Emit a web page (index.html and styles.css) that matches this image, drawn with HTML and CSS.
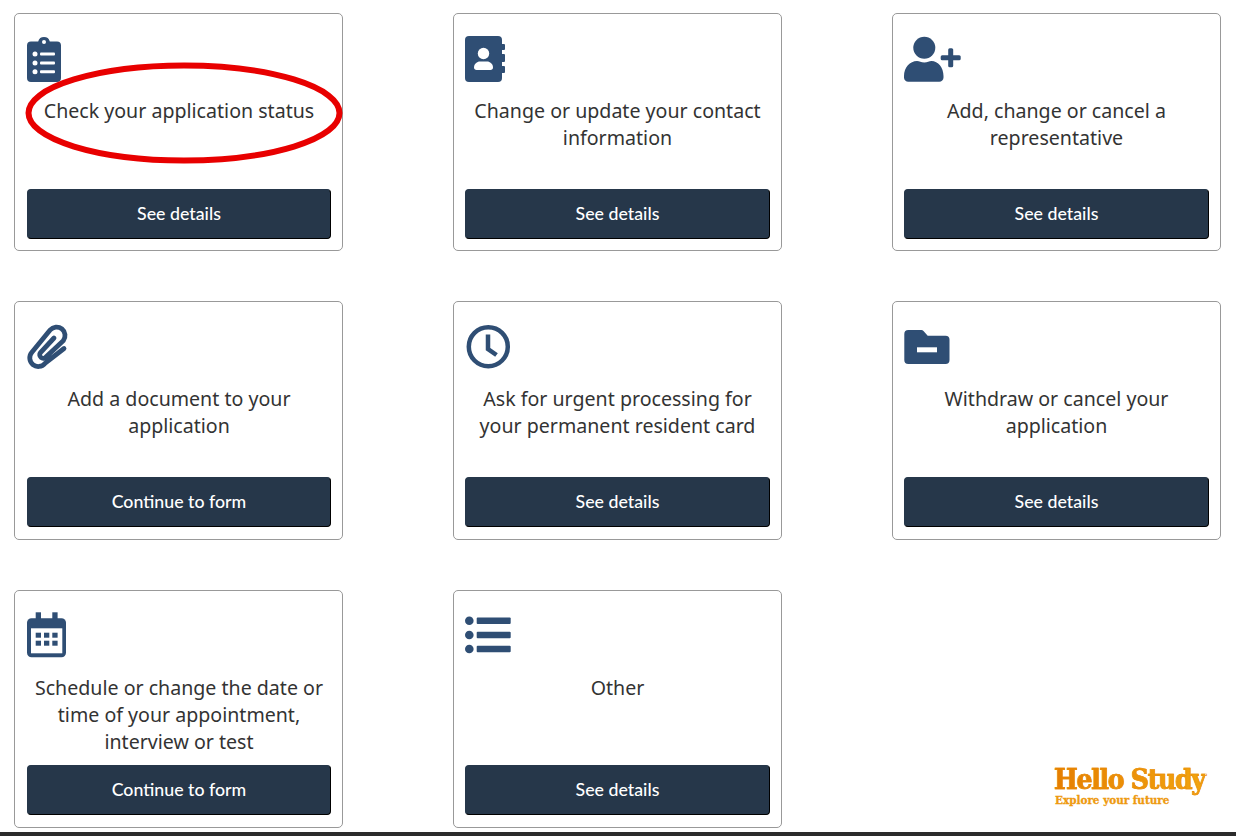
FILE: index.html
```html
<!DOCTYPE html>
<html lang="en">
<head>
<meta charset="utf-8">
<title>Services</title>
<link rel="stylesheet" href="styles.css">
</head>
<body>
<main class="grid">
  <section class="card">
    <div class="icon"><svg width="60" height="46" viewBox="0 0 60 46"><path class="fill" d="M4 5.5h7.2a6 6 0 0 1 11.6 0H30a4 4 0 0 1 4 4V42a4 4 0 0 1-4 4H4a4 4 0 0 1-4-4V9.500a4 4 0 0 1 4-4z"/><circle class="cut" cx="17" cy="6" r="2"/><circle class="cut" cx="8" cy="18" r="2.500"/><circle class="cut" cx="8" cy="27" r="2.500"/><circle class="cut" cx="8" cy="35.700" r="2.500"/><rect class="cut" x="13" y="16.500" width="15" height="3" rx="1"/><rect class="cut" x="13" y="25.500" width="15" height="3" rx="1"/><rect class="cut" x="13" y="34.200" width="15" height="3" rx="1"/></svg></div>
    <p class="label">Check your application status</p>
    <a class="btn">See details</a>
  </section>
  <section class="card">
    <div class="icon"><svg width="60" height="46" viewBox="0 0 60 46"><rect class="fill" x="0" y="0" width="37" height="46" rx="4"/><rect class="fill" x="36" y="8" width="4" height="6" rx="1"/><rect class="fill" x="36" y="18" width="4" height="8" rx="1"/><rect class="fill" x="36" y="30" width="4" height="7" rx="1"/><circle class="cut" cx="18.500" cy="17.500" r="5.700"/><path class="cut" d="M9 31.500c0-3.500 3-6 6-6h7c3 0 6 2.500 6 6 0 1.500-1 2.500-2.500 2.500h-14C10 34 9 33 9 31.500z"/></svg></div>
    <p class="label">Change or update your contact information</p>
    <a class="btn">See details</a>
  </section>
  <section class="card">
    <div class="icon"><svg width="60" height="46" viewBox="0 0 60 46"><circle class="fill" cx="20.300" cy="11.700" r="11"/><path class="fill" d="M0 40c0-8.500 6-15 13-15 2.500 0 4 1.500 7.300 1.500S25 25 27.500 25c6.500 0 12 6.500 12 15v1.500a4.300 4.300 0 0 1-4.300 4.300H4.300A4.300 4.300 0 0 1 0 41.500z"/><rect class="fill" x="36.700" y="19.200" width="20" height="5" rx="1.500"/><rect class="fill" x="44.200" y="12.300" width="5" height="19" rx="1.500"/></svg></div>
    <p class="label">Add, change or cancel a representative</p>
    <a class="btn">See details</a>
  </section>
  <section class="card">
    <div class="icon"><svg width="60" height="46" viewBox="0 0 60 46"><path class="line clip" d="M37 24.500 17.900 39.400A8.500 8.500 0 0 1 4.700 28.600L23.100 6A8.500 8.500 0 0 1 36.300 16.700L19 33A3.500 3.500 0 0 1 13.500 28.500L27 14"/></svg></div>
    <p class="label">Add a document to your application</p>
    <a class="btn">Continue to form</a>
  </section>
  <section class="card">
    <div class="icon"><svg width="60" height="46" viewBox="0 0 60 46"><circle class="line" cx="23.300" cy="22.700" r="19.500"/><path class="line hand" d="M23 10.500V25l8.500 6"/></svg></div>
    <p class="label">Ask for urgent processing for your permanent resident card</p>
    <a class="btn">See details</a>
  </section>
  <section class="card">
    <div class="icon"><svg width="60" height="46" viewBox="0 0 60 46"><path class="fill" d="M4.300 6h13a3 3 0 0 1 2.200.9l4.200 4.800h17.800a4 4 0 0 1 4 4V36a4 4 0 0 1-4 4H4.300a4 4 0 0 1-4-4V10a4 4 0 0 1 4-4z"/><rect class="cut" x="13" y="23.300" width="20" height="5"/></svg></div>
    <p class="label">Withdraw or cancel your application</p>
    <a class="btn">See details</a>
  </section>
  <section class="card">
    <div class="icon"><svg width="60" height="46" viewBox="0 0 60 46"><rect class="fill" x="8.700" y="-0.700" width="5.300" height="8"/><rect class="fill" x="25.300" y="-0.700" width="5.300" height="8"/><rect class="fill" x="0" y="5.300" width="39" height="39" rx="4.500"/><rect class="cut" x="4" y="15.300" width="31.300" height="25"/><rect class="fill" x="8.700" y="19.700" width="5.300" height="5"/><rect class="fill" x="17" y="19.700" width="5.300" height="5"/><rect class="fill" x="25.300" y="19.700" width="5.300" height="5"/><rect class="fill" x="8.700" y="27.700" width="5.300" height="5"/><rect class="fill" x="17" y="27.700" width="5.300" height="5"/><rect class="fill" x="25.300" y="27.700" width="5.300" height="5"/></svg></div>
    <p class="label">Schedule or change the date or time of your appointment, interview or test</p>
    <a class="btn">Continue to form</a>
  </section>
  <section class="card">
    <div class="icon"><svg width="60" height="46" viewBox="0 0 60 46"><circle class="fill" cx="4.300" cy="7.700" r="4.300"/><circle class="fill" cx="4.300" cy="22" r="4.300"/><circle class="fill" cx="4.300" cy="36" r="4.300"/><rect class="fill" x="11.700" y="4.500" width="34" height="6.500" rx="1"/><rect class="fill" x="11.700" y="18.800" width="34" height="6.500" rx="1"/><rect class="fill" x="11.700" y="32.800" width="34" height="6.500" rx="1"/></svg></div>
    <p class="label">Other</p>
    <a class="btn">See details</a>
  </section>
</main>
<footer class="bar"></footer>
<svg class="circle" width="360" height="180" viewBox="0 0 360 180"><ellipse cx="184" cy="113" rx="155.500" ry="47.500"/></svg>
<div class="logo">
  <div class="logo-name">Hello Study</div>
  <div class="logo-tag">Explore your future</div>
</div>
</body>
</html>
```
FILE: styles.css
```css
* { box-sizing: border-box; }
html, body { margin: 0; height: 836px; overflow: hidden; background: #fff; }
body {
  position: relative;
  display: flex;
  flex-direction: column;
  padding-top: 13px;
  font-family: "Noto Sans", "Open Sans", sans-serif;
}
.grid {
  display: grid;
  grid-template-columns: repeat(3, 329px);
  grid-template-rows: 238px 238.6px 238px;
  column-gap: 110px;
  row-gap: 50px;
  margin-left: 14px;
}
.card {
  display: flex;
  flex-direction: column;
  padding: 22px 11px 11.400px 12px;
  border: 1px solid #999;
  border-radius: 5px;
  background: #fff;
}
.card:not(:nth-child(3n+1)) { padding-left: 11px; }
.icon { height: 46px; flex: none; }
.icon svg { display: block; overflow: visible; }
.fill { fill: #2f4e74; }
.cut { fill: #fff; }
.line { fill: none; stroke: #2f4e74; stroke-width: 4.500; stroke-linecap: round; }
.clip { stroke-width: 4.800; }
.hand { stroke-linecap: butt; }
.label {
  margin: 15px 0 0;
  font-size: 19.600px;
  line-height: 27px;
  color: #333;
  text-align: center;
}
.btn {
  display: flex;
  align-items: center;
  justify-content: center;
  height: 50px;
  margin-top: auto;
  padding-bottom: 2px;
  flex: none;
  background: #26374a;
  border: 1px solid #26374a;
  border-right-color: #000;
  border-bottom-color: #000;
  border-radius: 4px;
  font-family: Lato, "Liberation Sans", sans-serif;
  font-size: 17.750px;
  font-weight: 500;
  color: #fff;
}
.bar {
  height: 4px;
  margin-top: auto;
  background: #2b2b2b;
}
.circle {
  position: absolute;
  left: 0;
  top: 0;
  pointer-events: none;
}
.circle ellipse { fill: none; stroke: #e80000; stroke-width: 6; }
.logo {
  position: absolute;
  left: 1054px;
  top: 763px;
  width: 170px;
  font-family: "DejaVu Serif", serif;
  font-weight: 700;
  font-stretch: condensed;
}
.logo-name {
  width: max-content;
  font-size: 28px;
  line-height: 33px;
  letter-spacing: -1.300px;
  background: linear-gradient(90deg, #e57e00, #f2a50f);
  -webkit-background-clip: text;
  background-clip: text;
  color: transparent;
  -webkit-text-stroke: 0.600px #ea8c06;
}
.logo-tag {
  margin-top: -2.500px;
  margin-left: 1px;
  font-size: 11.600px;
  line-height: 13px;
  color: #ee9a10;
  -webkit-text-stroke: 0.300px #ee9a10;
}
```
